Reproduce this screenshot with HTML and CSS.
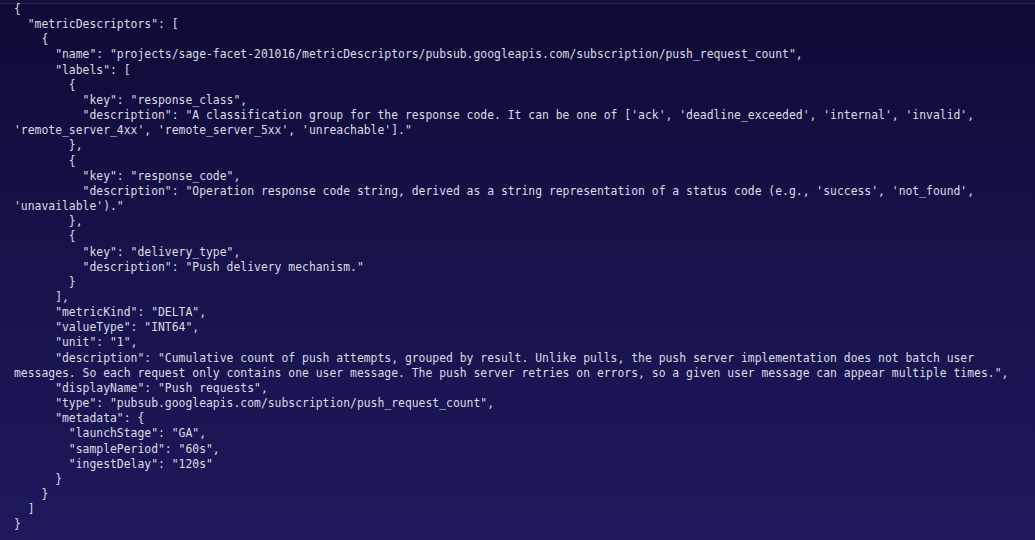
FILE: index.html
```html
<!DOCTYPE html>
<html>
<head>
<meta charset="utf-8">
<link rel="stylesheet" href="styles.css">
</head>
<body>
<div class="topline"></div>
<pre class="code">{
  "metricDescriptors": [
    {
      "name": "projects/sage-facet-201016/metricDescriptors/pubsub.googleapis.com/subscription/push_request_count",
      "labels": [
        {
          "key": "response_class",
          "description": "A classification group for the response code. It can be one of ['ack', 'deadline_exceeded', 'internal', 'invalid',
'remote_server_4xx', 'remote_server_5xx', 'unreachable']."
        },
        {
          "key": "response_code",
          "description": "Operation response code string, derived as a string representation of a status code (e.g., 'success', 'not_found',
'unavailable')."
        },
        {
          "key": "delivery_type",
          "description": "Push delivery mechanism."
        }
      ],
      "metricKind": "DELTA",
      "valueType": "INT64",
      "unit": "1",
      "description": "Cumulative count of push attempts, grouped by result. Unlike pulls, the push server implementation does not batch user
messages. So each request only contains one user message. The push server retries on errors, so a given user message can appear multiple times.",
      "displayName": "Push requests",
      "type": "pubsub.googleapis.com/subscription/push_request_count",
      "metadata": {
        "launchStage": "GA",
        "samplePeriod": "60s",
        "ingestDelay": "120s"
      }
    }
  ]
}</pre>
</body>
</html>
```
FILE: styles.css
```css
html, body {
  margin: 0;
  height: 100%;
}
body {
  background: linear-gradient(180deg, #0e0b37 0%, #16124a 45%, #1d195b 100%);
  overflow: hidden;
  position: relative;
}
.topline {
  height: 3px;
  border-bottom: 1px solid #26225c;
  background: #121040;
}
.code {
  margin: 0;
  padding: 0 0 0 14px;
  margin-top: -2px;
  font-family: "DejaVu Sans Mono", "Liberation Mono", monospace;
  font-size: 11.4px;
  line-height: 15.15px;
  color: #dcdce6;
  white-space: pre;
}
```
